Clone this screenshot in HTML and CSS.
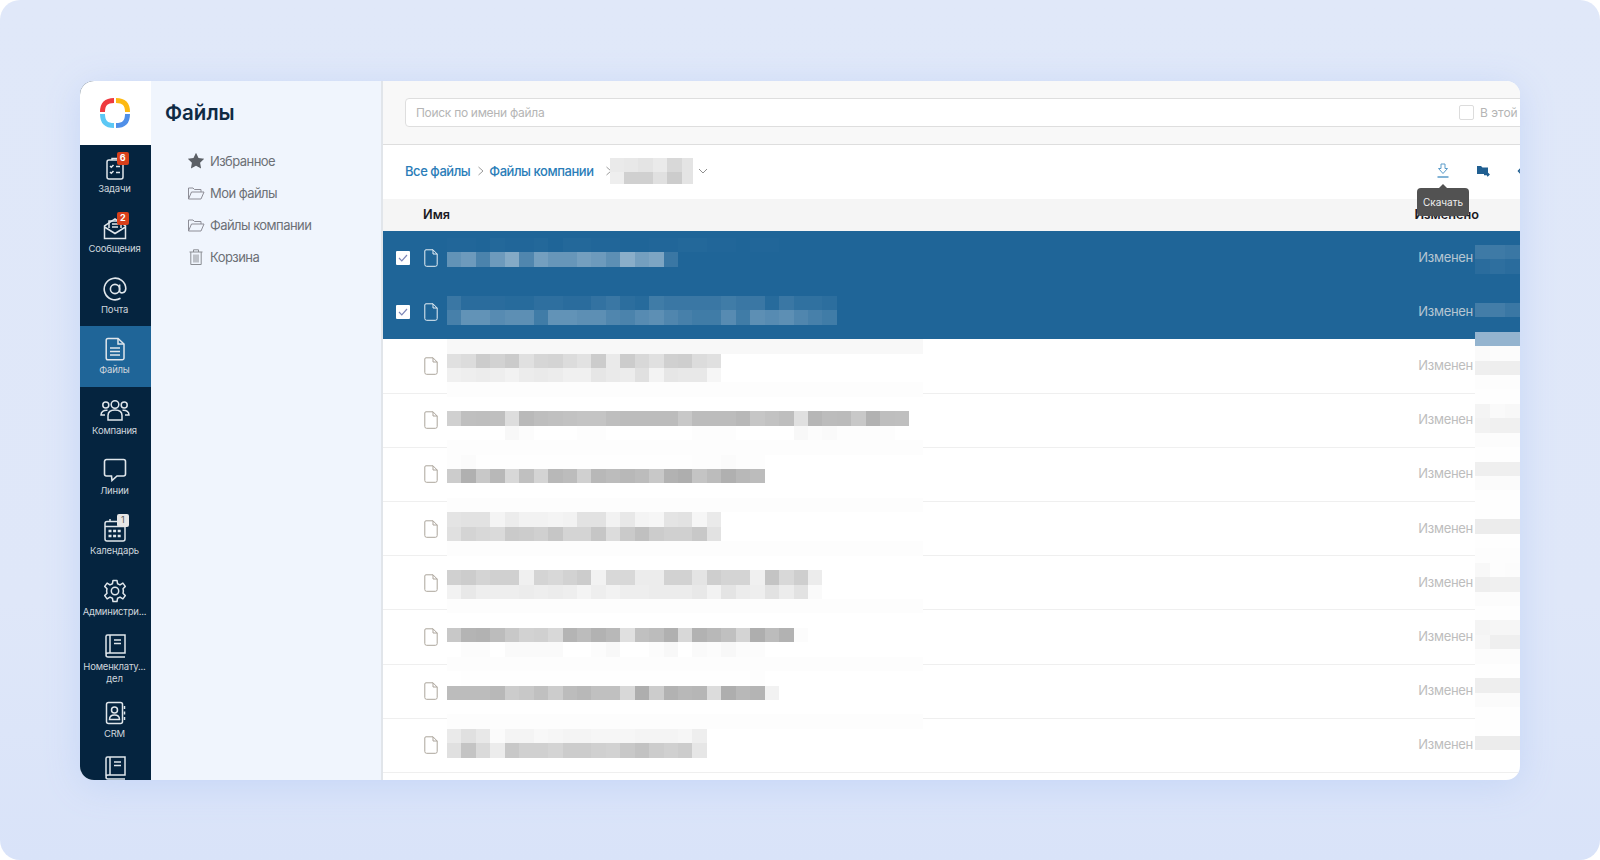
FILE: index.html
```html
<!DOCTYPE html>
<html lang="ru">
  <head>
    <meta charset="UTF-8" />
    <meta name="viewport" content="width=device-width, initial-scale=1.0" />
    <title>Файлы</title>
    <link rel="stylesheet" href="styles.css">
  </head>
  <body>
    <div class="page">
      <div class="window">
        <nav class="sidebar">
          <div class="logo">
            <svg width="32" height="32" viewBox="0 0 32 32" fill="none" stroke-width="5">
              <path d="M3.500 15 C3.500 7 7 3.500 15 3.500" stroke="#ee3a3f" />
              <path d="M17 3.500 C25 3.500 28.500 7 28.500 15" stroke="#fdb913" />
              <path d="M28.500 17 C28.500 25 25 28.500 17 28.500" stroke="#4f8fe8" />
              <path d="M15 28.500 C7 28.500 3.500 25 3.500 17" stroke="#5cc8f5" />
            </svg>
          </div>

          <a class="nav-item">
            <span class="nav-icon">
              <svg width="24" height="24" viewBox="0 0 24 24" fill="none" stroke="currentColor" stroke-width="1.5">
                <rect x="4" y="4" width="16" height="19" rx="2" />
                <path d="M9 4 V2.500 H15 V4" />
                <path d="M7 10 l1.300 1.300 L10.500 9 M13 10.500 h4 M7 16 l1.300 1.300 L10.500 15 M13 16.500 h4" />
              </svg>
              <b class="badge">6</b>
            </span>
            <span class="nav-label">Задачи</span>
          </a>
          <a class="nav-item">
            <span class="nav-icon">
              <svg width="24" height="24" viewBox="0 0 24 24" fill="none" stroke="currentColor" stroke-width="1.5">
                <path d="M1.500 10 V22.500 H22.500 V10 L12 3 Z" />
                <path d="M1.500 11 L12 17.500 L22.500 11" />
                <path d="M6 12 V5 H18 V12 M9 8 h6 M9 11 h6" />
              </svg>
              <b class="badge">2</b>
            </span>
            <span class="nav-label">Сообщения</span>
          </a>
          <a class="nav-item">
            <span class="nav-icon">
              <svg width="24" height="24" viewBox="0 0 24 24" fill="none" stroke="currentColor" stroke-width="1.6">
                <circle cx="12" cy="12" r="4.600" />
                <path d="M16.600 7.500 V14 C16.600 17 22.800 16.500 22.800 11.500 A10.800 10.800 0 1 0 17.500 21.300" />
              </svg>
            </span>
            <span class="nav-label">Почта</span>
          </a>
          <a class="nav-item is-active">
            <span class="nav-icon">
              <svg width="24" height="24" viewBox="0 0 24 24" fill="none" stroke="currentColor" stroke-width="1.5">
                <path d="M5 1.500 H15 L21 7 V21 A1.800 1.800 0 0 1 19.200 22.800 H5 A1.800 1.800 0 0 1 3.200 21 V3.300 A1.800 1.800 0 0 1 5 1.500 Z" />
                <path d="M15 1.500 V7 H21" />
                <path d="M7 11 H17 M7 14.500 H17 M7 18 H17" />
              </svg>
            </span>
            <span class="nav-label">Файлы</span>
          </a>
          <a class="nav-item">
            <span class="nav-icon">
              <svg width="30" height="24" viewBox="0 0 30 24" fill="none" stroke="currentColor" stroke-width="1.5">
                <circle cx="15" cy="6.500" r="3.800" />
                <circle cx="5.800" cy="7" r="3" />
                <circle cx="24.200" cy="7" r="3" />
                <path d="M8 22 V17.500 C8 13.500 11 12 15 12 C19 12 22 13.500 22 17.500 V22 Z" />
                <path d="M7.500 12.300 C3.500 12 1 13.800 1 17 H5 M22.500 12.300 C26.500 12 29 13.800 29 17 H25" />
              </svg>
            </span>
            <span class="nav-label">Компания</span>
          </a>
          <a class="nav-item">
            <span class="nav-icon">
              <svg width="24" height="24" viewBox="0 0 24 24" fill="none" stroke="currentColor" stroke-width="1.6">
                <path d="M3.500 1.500 H20.500 A2 2 0 0 1 22.500 3.500 V16 A2 2 0 0 1 20.500 18 H14 L9 22.500 L8.500 18 H3.500 A2 2 0 0 1 1.500 16 V3.500 A2 2 0 0 1 3.500 1.500 Z" />
              </svg>
            </span>
            <span class="nav-label">Линии</span>
          </a>
          <a class="nav-item">
            <span class="nav-icon">
              <svg width="24" height="24" viewBox="0 0 24 24" fill="none" stroke="currentColor" stroke-width="1.5">
                <rect x="2" y="3.500" width="20" height="19.500" rx="2" />
                <path d="M2 8.500 H22 M7 1 V4" />
                <path stroke-width="2.600" stroke-dasharray="3 1.600" d="M5.500 13 H19 M5.500 18 H19" />
              </svg>
              <b class="badge badge-light">1</b>
            </span>
            <span class="nav-label">Календарь</span>
          </a>
          <a class="nav-item">
            <span class="nav-icon">
              <svg width="24" height="24" viewBox="0 0 24 24" fill="none" stroke="currentColor" stroke-width="1.5">
                <circle cx="12" cy="12" r="3.700" />
                <path d="M10 1.500 H14 L14.600 4.800 L17 5.900 L19.900 4.100 L22.300 7.400 L20 9.700 L20.400 12 L20 14.300 L22.300 16.600 L19.900 19.900 L17 18.100 L14.600 19.200 L14 22.500 H10 L9.400 19.200 L7 18.100 L4.100 19.900 L1.700 16.600 L4 14.300 L3.600 12 L4 9.700 L1.700 7.400 L4.100 4.100 L7 5.900 L9.400 4.800 Z" stroke-linejoin="round" />
              </svg>
            </span>
            <span class="nav-label">Администри...</span>
          </a>
          <a class="nav-item nav-item-tall">
            <span class="nav-icon">
              <svg width="24" height="24" viewBox="0 0 24 24" fill="none" stroke="currentColor" stroke-width="1.5">
                <path d="M3 20 V2.500 A1.500 1.500 0 0 1 4.500 1 H22 V19 H5 A2 2 0 0 0 3 21 A2 2 0 0 0 5 23 H22" />
                <path d="M7 1 V19 M11 6 H18 M11 9.500 H18" />
              </svg>
            </span>
            <span class="nav-label">Номенклату... дел</span>
          </a>
          <a class="nav-item nav-item-short">
            <span class="nav-icon">
              <svg width="24" height="24" viewBox="0 0 24 24" fill="none" stroke="currentColor" stroke-width="1.5">
                <rect x="3.500" y="1.500" width="16" height="21" rx="2" />
                <circle cx="11.500" cy="9" r="3" />
                <path d="M6.500 18.500 C6.500 15 9 14 11.500 14 C14 14 16.500 15 16.500 18.500 Z" />
                <path d="M21.500 5 V8 M21.500 10.500 V13.500 M21.500 16 V19" />
              </svg>
            </span>
            <span class="nav-label">CRM</span>
          </a>
          <a class="nav-item">
            <span class="nav-icon">
              <svg width="24" height="24" viewBox="0 0 24 24" fill="none" stroke="currentColor" stroke-width="1.5">
                <path d="M3 20 V2.500 A1.500 1.500 0 0 1 4.500 1 H22 V19 H5 A2 2 0 0 0 3 21 A2 2 0 0 0 5 23 H22" />
                <path d="M7 1 V19 M11 6 H18 M11 9.500 H18" />
              </svg>
            </span>
          </a>
        </nav>

        <aside class="panel">
          <h1 class="panel-title">Файлы</h1>
          <ul class="tree">
            <li class="tree-item">
              <svg width="18" height="18" viewBox="0 0 18 18"><path fill="#5c6066" d="M9 .8 11.500 6l5.700.8-4.100 4 1 5.700L9 13.800l-5.100 2.700 1-5.700-4.100-4L6.500 6z" /></svg>
              Избранное
            </li>
            <li class="tree-item">
              <svg width="18" height="18" viewBox="0 0 18 18" fill="none" stroke="#8d8d96" stroke-width="1"><path d="M1.500 15 V4 H6 L7.500 5.500 H14 V8 M1.500 15 L4.500 8 H17 L14 15 Z" /></svg>
              Мои файлы
            </li>
            <li class="tree-item">
              <svg width="18" height="18" viewBox="0 0 18 18" fill="none" stroke="#8d8d96" stroke-width="1"><path d="M1.500 15 V4 H6 L7.500 5.500 H14 V8 M1.500 15 L4.500 8 H17 L14 15 Z" /></svg>
              Файлы компании
            </li>
            <li class="tree-item">
              <svg width="18" height="18" viewBox="0 0 18 18" fill="none" stroke="#8a8d93" stroke-width="1"><path d="M2.500 4 H15.500 M6.500 4 V1.800 H11.500 V4 M3.800 4 V16.500 H14.200 V4 M7 6.500 V14.500 M9 6.500 V14.500 M11 6.500 V14.500" /></svg>
              Корзина
            </li>
          </ul>
        </aside>

        <main class="main">
          <div class="search-bar">
            <div class="search-box">
              <span class="search-hint">Поиск по имени файла</span>
              <span class="search-check"></span>
              <span class="search-scope">В этой</span>
            </div>
          </div>

          <div class="crumbs">
            <a class="crumb">Все файлы</a>
            <span class="crumb-sep crumb-sep-wide">
              <svg width="8" height="10" viewBox="0 0 8 10" fill="none" stroke="#9a9a9a"><path d="M1.500 1 L6 5 L1.500 9" /></svg>
            </span>
            <a class="crumb">Файлы компании</a>
            <span class="crumb-sep crumb-sep-last">
              <svg width="8" height="10" viewBox="0 0 8 10" fill="none" stroke="#9a9a9a"><path d="M1.500 1 L6 5 L1.500 9" /></svg>
            </span>
            <div class="crumb-hidden" id="crumb-hidden"></div>
            <svg class="crumb-arrow" width="10" height="6" viewBox="0 0 10 6" fill="none" stroke="#8f8f8f"><path d="M1 1 L5 5 L9 1" /></svg>

            <div class="tools">
              <svg class="tool tool-download" width="14" height="16" viewBox="0 0 14 16" fill="none" stroke="#5a9bc9">
                <path d="M5 1 H9 V5.500 H11.500 L7 10.500 L2.500 5.500 H5 Z" />
                <path stroke-width="1.300" d="M1.500 14 H12.500" />
              </svg>
              <svg class="tool tool-move" width="14" height="12" viewBox="0 0 14 12">
                <path fill="#205f91" d="M1 1 H5 L6.500 2.500 H12 V9 H1 Z" />
                <path fill="none" stroke="#205f91" stroke-width="1.300" d="M8 9.500 H13 M11.200 7.800 L13 9.500 L11.200 11.200" />
              </svg>
              <svg class="tool tool-share" width="14" height="12" viewBox="0 0 14 12" fill="none" stroke="#205f91" stroke-width="1.500">
                <path d="M5 2 L1.500 6 L5 10" />
              </svg>
            </div>
            <div class="tooltip">Скачать</div>
          </div>

          <div class="list-head">
            <span class="head-name">Имя</span>
            <span class="head-date">Изменено</span>
          </div>

          <div class="files">
            <div class="file is-selected">
              <span class="file-check"><svg width="10" height="8" viewBox="0 0 10 8" fill="none" stroke="#7d86b8" stroke-width="1.200"><path d="M1 4 L3.800 6.800 L9 1" /></svg></span>
              <svg class="file-icon" width="14" height="18" viewBox="0 0 14 18" fill="none" stroke="currentColor"><path d="M2 .8 H9 L13.200 5 V15.500 A1.800 1.800 0 0 1 11.400 17.300 H2.600 A1.800 1.800 0 0 1 .8 15.500 V2 A1.200 1.200 0 0 1 2 .8 Z M9 .8 V5 H13.200" /></svg>
              <span class="file-date">Изменен</span>
            </div>
            <div class="file is-selected">
              <span class="file-check"><svg width="10" height="8" viewBox="0 0 10 8" fill="none" stroke="#7d86b8" stroke-width="1.200"><path d="M1 4 L3.800 6.800 L9 1" /></svg></span>
              <svg class="file-icon" width="14" height="18" viewBox="0 0 14 18" fill="none" stroke="currentColor"><path d="M2 .8 H9 L13.200 5 V15.500 A1.800 1.800 0 0 1 11.400 17.300 H2.600 A1.800 1.800 0 0 1 .8 15.500 V2 A1.200 1.200 0 0 1 2 .8 Z M9 .8 V5 H13.200" /></svg>
              <span class="file-date">Изменен</span>
            </div>
            <div class="file">
              <span class="file-check"></span>
              <svg class="file-icon" width="14" height="18" viewBox="0 0 14 18" fill="none" stroke="currentColor"><path d="M2 .8 H9 L13.200 5 V15.500 A1.800 1.800 0 0 1 11.400 17.300 H2.600 A1.800 1.800 0 0 1 .8 15.500 V2 A1.200 1.200 0 0 1 2 .8 Z M9 .8 V5 H13.200" /></svg>
              <span class="file-date">Изменен</span>
            </div>
            <div class="file">
              <span class="file-check"></span>
              <svg class="file-icon" width="14" height="18" viewBox="0 0 14 18" fill="none" stroke="currentColor"><path d="M2 .8 H9 L13.200 5 V15.500 A1.800 1.800 0 0 1 11.400 17.300 H2.600 A1.800 1.800 0 0 1 .8 15.500 V2 A1.200 1.200 0 0 1 2 .8 Z M9 .8 V5 H13.200" /></svg>
              <span class="file-date">Изменен</span>
            </div>
            <div class="file">
              <span class="file-check"></span>
              <svg class="file-icon" width="14" height="18" viewBox="0 0 14 18" fill="none" stroke="currentColor"><path d="M2 .8 H9 L13.200 5 V15.500 A1.800 1.800 0 0 1 11.400 17.300 H2.600 A1.800 1.800 0 0 1 .8 15.500 V2 A1.200 1.200 0 0 1 2 .8 Z M9 .8 V5 H13.200" /></svg>
              <span class="file-date">Изменен</span>
            </div>
            <div class="file">
              <span class="file-check"></span>
              <svg class="file-icon" width="14" height="18" viewBox="0 0 14 18" fill="none" stroke="currentColor"><path d="M2 .8 H9 L13.200 5 V15.500 A1.800 1.800 0 0 1 11.400 17.300 H2.600 A1.800 1.800 0 0 1 .8 15.500 V2 A1.200 1.200 0 0 1 2 .8 Z M9 .8 V5 H13.200" /></svg>
              <span class="file-date">Изменен</span>
            </div>
            <div class="file">
              <span class="file-check"></span>
              <svg class="file-icon" width="14" height="18" viewBox="0 0 14 18" fill="none" stroke="currentColor"><path d="M2 .8 H9 L13.200 5 V15.500 A1.800 1.800 0 0 1 11.400 17.300 H2.600 A1.800 1.800 0 0 1 .8 15.500 V2 A1.200 1.200 0 0 1 2 .8 Z M9 .8 V5 H13.200" /></svg>
              <span class="file-date">Изменен</span>
            </div>
            <div class="file">
              <span class="file-check"></span>
              <svg class="file-icon" width="14" height="18" viewBox="0 0 14 18" fill="none" stroke="currentColor"><path d="M2 .8 H9 L13.200 5 V15.500 A1.800 1.800 0 0 1 11.400 17.300 H2.600 A1.800 1.800 0 0 1 .8 15.500 V2 A1.200 1.200 0 0 1 2 .8 Z M9 .8 V5 H13.200" /></svg>
              <span class="file-date">Изменен</span>
            </div>
            <div class="file">
              <span class="file-check"></span>
              <svg class="file-icon" width="14" height="18" viewBox="0 0 14 18" fill="none" stroke="currentColor"><path d="M2 .8 H9 L13.200 5 V15.500 A1.800 1.800 0 0 1 11.400 17.300 H2.600 A1.800 1.800 0 0 1 .8 15.500 V2 A1.200 1.200 0 0 1 2 .8 Z M9 .8 V5 H13.200" /></svg>
              <span class="file-date">Изменен</span>
            </div>
            <div class="file">
              <span class="file-check"></span>
              <svg class="file-icon" width="14" height="18" viewBox="0 0 14 18" fill="none" stroke="currentColor"><path d="M2 .8 H9 L13.200 5 V15.500 A1.800 1.800 0 0 1 11.400 17.300 H2.600 A1.800 1.800 0 0 1 .8 15.500 V2 A1.200 1.200 0 0 1 2 .8 Z M9 .8 V5 H13.200" /></svg>
              <span class="file-date">Изменен</span>
            </div>

            <!-- pixelated names and dates, filled in by script.js -->
            <div class="censor censor-names" id="censor-names"></div>
            <div class="censor censor-dates" id="censor-dates"></div>
          </div>
        </main>
      </div>
    </div>
    <script src="script.js"></script>
  </body>
</html>
```

FILE: styles.css
```css
* {
  box-sizing: border-box;
}
:root,
body {
  height: 100%;
  margin: 0;
}
body {
  background-color: #fff;
  font-family: Inter, "Noto Sans", sans-serif;
  overflow: hidden;
}
.page {
  height: 860px;
  padding: 81px 80px 80px;
  border-radius: 20px;
  background: linear-gradient(180deg, #e0e8f9 0%, #dfe7f9 70%, #d9e3f9 100%);
}
.window {
  display: flex;
  height: 699px;
  border-radius: 14px;
  background: #fff;
  overflow: hidden;
  box-shadow: 0 6px 36px #c6d6f6;
}

/* left nav */
.sidebar {
  flex: none;
  width: 71px;
  background: #05243f;
  color: #e0e6eb;
  overflow: hidden;
}
.logo {
  display: flex;
  justify-content: center;
  align-items: center;
  height: 64px;
  padding-right: 2px;
  background: #fff;
}
.nav-item {
  display: flex;
  flex-direction: column;
  align-items: center;
  height: 60.400px;
  padding: 11px 2px 0 0;
}
.nav-item.is-active {
  background: #1f6598;
}
.nav-item-tall {
  height: 62px;
  padding-top: 6px;
}
.nav-item-short {
  height: 55px;
}
.nav-icon {
  position: relative;
  display: flex;
  justify-content: center;
  height: 24px;
}
.nav-label {
  margin-top: 3px;
  max-width: 71px;
  font-size: 9.500px;
  line-height: 12px;
  letter-spacing: -0.2px;
  text-align: center;
  color: #cfd6dd;
}
.badge {
  position: absolute;
  top: -4px;
  left: 14px;
  width: 12.500px;
  height: 12.500px;
  border-radius: 2px;
  background: #d8401b;
  color: #fff;
  font-size: 9px;
  line-height: 12.500px;
  text-align: center;
}
.badge-light {
  background: #e6e6e6;
  color: #5c5c5c;
  font-weight: 400;
}

/* second column */
.panel {
  flex: none;
  width: 232px;
  background: #f0f5fd;
  border-right: 2px solid #e1e5ea;
}
.panel-title {
  margin: 20px 0 20px 14px;
  font-size: 20.500px;
  line-height: 24px;
  font-weight: 600;
  color: #0f2a44;
}
.tree {
  list-style: none;
  margin: 0;
  padding: 0 0 0 36px;
}
.tree-item {
  display: flex;
  align-items: center;
  gap: 5px;
  height: 32.100px;
  font-size: 13px;
  letter-spacing: -0.55px;
  color: #6c7076;
}

/* main */
.main {
  flex: 1;
  min-width: 0;
  display: flex;
  flex-direction: column;
}
.search-bar {
  flex: none;
  height: 64px;
  padding: 17px 0 0 22px;
  background: #f8f8f8;
  border-bottom: 1px solid #dedede;
}
.search-box {
  display: flex;
  align-items: center;
  width: 1250px;
  height: 29px;
  padding-left: 10px;
  border: 1px solid #dedede;
  border-radius: 4px;
  background: #fff;
  font-size: 12px;
  letter-spacing: -0.3px;
  color: #b5b5b5;
}
.search-hint {
  flex: 1;
}
.search-check {
  width: 15px;
  height: 15px;
  margin-right: 6px;
  border: 1px solid #dcdcdc;
  border-radius: 2px;
}
.search-scope {
  width: 174px;
  letter-spacing: 0;
  white-space: nowrap;
}

.crumbs {
  position: relative;
  flex: none;
  display: flex;
  align-items: center;
  height: 54px;
  padding: 0 0 2px 22px;
  font-size: 13px;
  letter-spacing: -0.45px;
  font-weight: 500;
  color: #2a7db8;
}
.crumb-sep {
  display: flex;
}
.crumb-sep-wide {
  margin: 0 4px 0 7px;
}
.crumb-sep-last {
  margin: 0 -3px 0 11px;
}
.crumb-hidden {
  display: flex;
  flex-direction: column;
  width: 83px;
  height: 26px;
  overflow: hidden;
}
.crumb-arrow {
  margin-left: 5px;
}
.tools {
  flex: 1;
  display: flex;
  align-items: center;
  justify-content: flex-end;
  height: 20px;
}
.tool {
  flex: none;
}
.tool-download {
  margin-right: 26px;
}
.tool-move {
  margin-right: 27px;
}
.tool-share {
  margin-right: -11px;
}
.tooltip {
  position: absolute;
  top: 43px;
  right: 51px;
  z-index: 2;
  width: 52px;
  height: 28px;
  border-radius: 4px;
  background: #525252;
  color: #f0f0f0;
  font-size: 10px;
  letter-spacing: 0;
  font-weight: 400;
  line-height: 28px;
  text-align: center;
}
.tooltip::before {
  content: "";
  position: absolute;
  top: -4px;
  left: 22px;
  border: 4px solid transparent;
  border-top: 0;
  border-bottom-color: #525252;
}

.list-head {
  flex: none;
  display: flex;
  justify-content: space-between;
  align-items: center;
  height: 32px;
  padding: 0 41px 1px 40px;
  background: #f5f5f5;
  font-size: 12.700px;
  font-weight: 600;
  color: #1a1a24;
}

.files {
  position: relative;
  flex: 1;
  overflow: hidden;
}
.file {
  display: flex;
  align-items: center;
  height: 54.200px;
  padding: 0 47px 0 13px;
  border-bottom: 1px solid #efefef;
  color: #aca59c;
}
.file-check {
  display: flex;
  justify-content: center;
  align-items: center;
  flex: none;
  width: 14px;
  height: 14px;
  border-radius: 1px;
}
.file-icon {
  flex: none;
  margin-left: 14px;
}
.file-date {
  margin-left: auto;
  padding-bottom: 2px;
  font-size: 13px;
  letter-spacing: -0.3px;
  color: #bdbdbd;
}
.file.is-selected {
  background: #1f6598;
  border-bottom: 0;
  color: #e8f0f6;
}
.is-selected .file-check {
  background: #fff;
}
.is-selected .file-date {
  color: #b6c5d2;
}

.censor {
  position: absolute;
  display: flex;
  flex-direction: column;
  pointer-events: none;
}
.censor-names {
  top: 7px;
  left: 64px;
  width: 477px;
}
.censor-dates {
  top: 14px;
  right: 0;
  width: 45px;
}
.censor-line {
  display: flex;
  flex: none;
  height: 14.450px;
}
.censor-cell {
  flex: none;
  width: 14.450px;
  height: 14.450px;
}
.censor-dates .censor-cell {
  width: 15px;
}
```

FILE: script.js
```js
// pixel blocks that hide file names: one entry per 14.45px line, hex gray per cell
// "a" lines are white alpha (%) on the blue selected rows
const FAINT = Array(33).fill("fd").join(" ");

const nameLines = {
  0: "a:1 1 0 2 1 1 2 0 2 2 1 1 0 0 1 1 2 2 1 1 0 1 1 0",
  1: "a:30 35 20 35 45 22 38 32 32 38 35 28 48 38 42 12",
  4: "a:12 5 5 5 4 4 7 7 5 5 9 12 6 4 15 12 12 12 12 15 12 12 4 12 8 8 6",
  5: "a:18 30 30 25 28 28 15 30 30 28 28 22 20 25 28 22 18 15 15 25 15 28 25 28 22 18 15",
  7: Array(33).fill("f8").join(" "),
  8: "e0 dc cc d2 cb e0 d6 d4 dc e2 cc ea cc d8 e0 d0 ce dc e0",
  9: "f0 ee ec ee f2 ec ea ec f0 f0 e6 ea ec e0 f3 e6 e8 e8 f6",
  10: FAINT,
  12: "d0 bf be bf dd b9 be c0 c2 c4 c4 be bc bc bc bc c8 bc bc bc b8 c6 c2 be e0 b6 bc bb c8 b2 be bf",
  13: "ff ff ff ff f8 fc ff ff ff fd fd ff ff ff ff ff ff fd fd fd ff ff ff ff f8 fc fa fd fd fd fd",
  14: FAINT,
  15: "fd fb fe fe fe fe fe fe fe fe fe fe fe fe fe fe fe fd fd fb fd fd",
  16: "cc b0 c8 b8 d8 c0 d4 b8 bc d0 b8 bc b8 bc c8 b2 ae c4 bc b0 b8 bc",
  18: FAINT,
  19: "e4 e2 e2 f4 ec f2 f2 f4 f2 e2 e2 f2 e8 f4 f6 e4 e2 f6 ea",
  20: "e0 d4 d8 da ca cc d0 c6 d4 d4 c6 dc ca c0 cc d0 d0 c8 e2",
  21: FAINT,
  23: "d0 cc d4 d0 d0 f0 d4 d8 d2 cc f2 d8 d8 ec ec d2 d2 e4 ce d4 d4 f0 c4 d8 ce ec",
  24: "f2 e8 ee ee ee ec ee ec ee f4 ee f2 ee ee ec ec ec e8 f2 e4 ec ee e2 ec e2 fa",
  25: FAINT,
  27: "c8 b4 b2 bc c8 d2 d0 d8 b4 bc b2 b8 e0 c0 bc b0 d8 b2 b8 c0 d4 ae bc b2 fc",
  28: "ff fc fc ff fa fa fa fa ff ff fc f8 ff ff fc f8 ff fa fc f8 fc fc",
  29: FAINT,
  30: "ff fe fe fe fe fe fe fe fe fe fe fe fe fe fe fe fe fe fe fe fe fd",
  31: "bc bc bc b8 cc c8 c0 cc bc b8 c0 c0 d8 ae cc b2 b8 b6 dc ae b8 b4 f2",
  33: FAINT,
  34: "ea e0 e8 fb f4 f4 f8 f6 f4 f4 f6 f6 f6 f4 f4 f4 f6 ee",
  35: "e0 c4 da ec c8 d0 d0 d4 cc cc d0 d2 c8 c2 cc d0 cc e6",
};

const dateLines = {
  0: "a:14 14 12",
  1: "a:5 7 5",
  4: "a:16 16 12",
  6: "#94b4cf #94b4cf #94b4cf",
  7: "fa fc fc", 8: "ef ee ee", 9: "fd fd fd", 10: "fe fe fe",
  11: "f4 fa f8", 12: "f2 f0 f0", 13: "fc fc fc", 14: "fe fe fe",
  15: "ef ef ef", 16: "fb fb fb", 17: "fe fe fe", 18: "fe fe fe",
  19: "ec ec ec", 20: "fe fe fe", 21: "fd fd fd", 22: "f8 fd fc",
  23: "ee f0 f0", 24: "fc fc fc", 25: "fe fe fe", 26: "f4 f6 f6",
  27: "f6 ef ef", 28: "fc fc fc", 29: "fe fe fe", 30: "ee ee ee",
  31: "fb fb fb", 32: "fe fe fe", 33: "fe fe fe", 34: "ec ec ec",
};

function cellColor(value, isAlpha) {
  if (isAlpha) return `rgba(255, 255, 255, ${value / 100})`;
  if (value[0] === "#") return value;
  return `#${value}${value}${value}`;
}

function fillCensor(el, lines, count) {
  for (let i = 0; i < count; i++) {
    const line = document.createElement("div");
    line.className = "censor-line";
    let data = lines[i] || "";
    const isAlpha = data.startsWith("a:");
    if (isAlpha) data = data.slice(2);
    data.split(" ").filter(Boolean).forEach((value) => {
      const cell = document.createElement("span");
      cell.className = "censor-cell";
      cell.style.background = cellColor(value, isAlpha);
      line.appendChild(cell);
    });
    el.appendChild(line);
  }
}

fillCensor(document.getElementById("censor-names"), nameLines, 36);
fillCensor(document.getElementById("censor-dates"), dateLines, 35);

fillCensor(document.getElementById("crumb-hidden"), {
  0: "ea e8 e4 ea d8 e4",
  1: "ee d0 d0 e0 cc e4",
}, 2);
```
